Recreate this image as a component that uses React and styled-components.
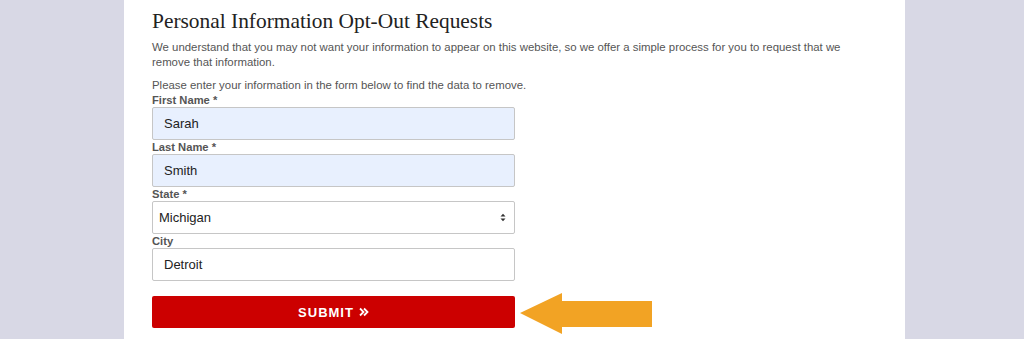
import React from "react";
import styled, { createGlobalStyle } from "styled-components";

const Global = createGlobalStyle`
  html, body {
    margin: 0;
    padding: 0;
    background: #d8d8e5;
  }
  body {
    font-family: "Liberation Sans", Arial, sans-serif;
  }
`;

const Page = styled.div`
  height: 339px;
  overflow: hidden;
`;

const Panel = styled.main`
  margin-left: 124px;
  width: 781px;
  min-height: 339px;
  background: #fff;
  box-sizing: border-box;
  padding: 8px 28px 0;
`;

const Title = styled.h2`
  margin: 0 0 6px;
  font-family: "Liberation Serif", "Times New Roman", serif;
  font-weight: 400;
  font-size: 21.4px;
  line-height: 26px;
  color: #222;
`;

const Text = styled.p`
  margin: 0 0 8px;
  max-width: 720px;
  font-size: 11.4px;
  line-height: 15px;
  color: #555;
  &:last-of-type {
    margin-bottom: 0;
  }
`;

const Form = styled.form`
  width: 363px;
`;

const Field = styled.div`
  display: flex;
  flex-direction: column;
`;

const Label = styled.label`
  font-size: 11.2px;
  line-height: 14px;
  font-weight: 700;
  color: #555;
`;

const Input = styled.input`
  box-sizing: border-box;
  height: 33px;
  width: 100%;
  margin: 0;
  padding: 0 11px;
  border: 1px solid #c6c6c6;
  border-radius: 2px;
  background: ${(p) => (p.$filled ? "#e8f0fe" : "#fff")};
  font-family: "Liberation Sans", Arial, sans-serif;
  font-size: 13px;
  color: #222;
  outline: none;
`;

const SelectWrap = styled.div`
  position: relative;
  svg {
    position: absolute;
    right: 9px;
    top: 12px;
    pointer-events: none;
  }
`;

const Select = styled.select`
  box-sizing: border-box;
  height: 33px;
  width: 100%;
  margin: 0;
  padding: 0 6px;
  border: 1px solid #c6c6c6;
  border-radius: 2px;
  background: #fff;
  appearance: none;
  font-family: "Liberation Sans", Arial, sans-serif;
  font-size: 13px;
  color: #222;
  outline: none;
`;

const ButtonRow = styled.div`
  position: relative;
  margin-top: 15px;
`;

const Submit = styled.button`
  box-sizing: border-box;
  width: 100%;
  height: 32px;
  border: none;
  border-radius: 2px;
  background: #cc0000;
  color: #fff;
  font-family: "Liberation Sans", Arial, sans-serif;
  font-size: 13px;
  font-weight: 700;
  letter-spacing: 1px;
  display: flex;
  align-items: center;
  justify-content: center;
  gap: 5px;
  cursor: pointer;
`;

const Pointer = styled.svg`
  position: absolute;
  left: 367px;
  top: -4px;
`;

export default function App() {
  return (
    <Page>
      <Global />
      <Panel>
        <Title>Personal Information Opt-Out Requests</Title>
        <Text>
          We understand that you may not want your information to appear on this
          website, so we offer a simple process for you to request that we remove
          that information.
        </Text>
        <Text>Please enter your information in the form below to find the data to remove.</Text>
        <Form onSubmit={(e) => e.preventDefault()}>
          <Field>
            <Label>First Name *</Label>
            <Input $filled defaultValue="Sarah" />
          </Field>
          <Field>
            <Label>Last Name *</Label>
            <Input $filled defaultValue="Smith" />
          </Field>
          <Field>
            <Label>State *</Label>
            <SelectWrap>
              <Select defaultValue="MI">
                <option value="MI">Michigan</option>
              </Select>
              <svg width="6" height="9" viewBox="0 0 6 9">
                <path d="M0.5 3.5 L3 0.8 L5.5 3.5 Z M0.5 5.5 L3 8.2 L5.5 5.5 Z" fill="#333" />
              </svg>
            </SelectWrap>
          </Field>
          <Field>
            <Label>City</Label>
            <Input defaultValue="Detroit" />
          </Field>
          <ButtonRow>
            <Submit type="submit">
              SUBMIT
              <svg width="10" height="10" viewBox="0 0 10 10">
                <path d="M1 1.5 L4.5 5 L1 8.5 M5 1.5 L8.5 5 L5 8.5" stroke="#fff" strokeWidth="1.8" fill="none" />
              </svg>
            </Submit>
            <Pointer width="134" height="43" viewBox="0 0 134 43">
              <polygon points="1,21 43,1 43,9 133,9 133,35 43,35 43,42" fill="#f2a324" />
            </Pointer>
          </ButtonRow>
        </Form>
      </Panel>
    </Page>
  );
}
